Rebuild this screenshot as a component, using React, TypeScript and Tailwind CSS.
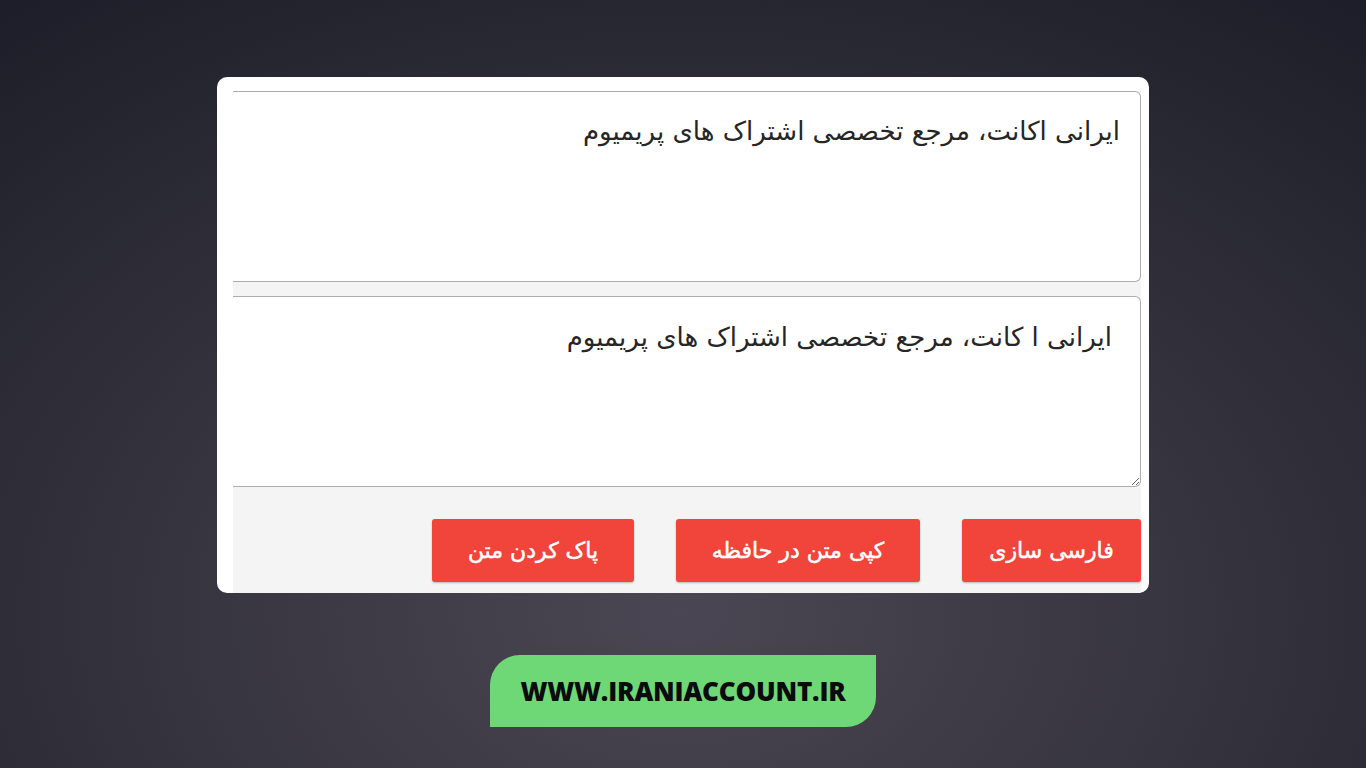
export default function App() {
  const fa = { fontFamily: '"DejaVu Sans", sans-serif' };
  const buttons = [
    { label: "فارسی سازی", w: "w-[179px]" },
    { label: "کپی متن در حافظه", w: "w-[244px]" },
    { label: "پاک کردن متن", w: "w-[202px]" },
  ];
  return (
    <div className="w-full h-[768px] overflow-hidden flex flex-col items-center bg-[radial-gradient(ellipse_80%_100%_at_50%_80%,#4b4653_0%,#37353f_45%,#1d1e29_100%)]">
      {/* screenshot card */}
      <div className="mt-[77px] w-[932px] h-[516px] bg-white rounded-[10px] overflow-hidden pt-[14px] pl-4 pr-2">
        <div className="h-full bg-[#f4f4f4] flex flex-col">
          <textarea
            readOnly
            defaultValue="ایرانی اکانت، مرجع تخصصی اشتراک های پریمیوم"
            style={fa}
            className="h-[191px] w-full resize-none bg-white border border-l-0 border-[#adadad] rounded-r-[6px] text-right pr-5 pt-[23px] text-[26px] leading-[32px] text-[#262626] outline-none"
          />
          <textarea
            readOnly
            defaultValue="ایرانی ا کانت، مرجع تخصصی اشتراک های پریمیوم"
            style={fa}
            className="mt-[14px] h-[191px] w-full resize-y bg-white border border-l-0 border-[#adadad] rounded-r-[6px] text-right pr-7 pt-[24px] text-[26px] leading-[32px] text-[#262626] outline-none"
          />
          <div dir="rtl" className="flex gap-[42px] pt-[32px]">
            {buttons.map((b) => (
              <button
                key={b.label}
                style={fa}
                className={`${b.w} h-[63px] bg-[#f1443a] text-white text-[22px] [-webkit-text-stroke:0.5px_white] rounded-[3px] shadow-[0_1px_2px_rgba(0,0,0,0.25)]`}
              >
                {b.label}
              </button>
            ))}
          </div>
        </div>
      </div>

      {/* site badge */}
      <div className="mt-[62px] w-[386px] h-[72px] bg-[#6fd876] rounded-tl-[30px] rounded-br-[30px] flex items-center justify-center">
        <span
          style={{ fontFamily: '"Open Sans", sans-serif' }}
          className="text-[26px] font-extrabold text-[#0b0b0b] tracking-[-0.2px]"
        >
          WWW.IRANIACCOUNT.IR
        </span>
      </div>
    </div>
  );
}
